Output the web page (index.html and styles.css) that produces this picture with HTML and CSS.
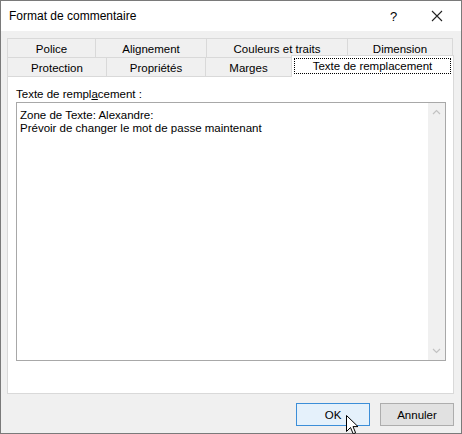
FILE: index.html
```html
<!DOCTYPE html>
<html lang="fr">
<head>
    <meta charset="UTF-8">
    <title>Format de commentaire</title>
    <link rel="stylesheet" href="styles.css">
</head>
<body>
    <div class="dialog">
        <div class="titlebar">
            <span class="title">Format de commentaire</span>
            <span class="help">?</span>
            <span class="close">
                <svg width="12" height="12" viewBox="0 0 12 12"><path d="M1 1 L11 11 M11 1 L1 11" stroke="#222" stroke-width="1.1" fill="none"/></svg>
            </span>
        </div>
        <div class="content">
            <div class="tabs">
                <div class="tab-row">
                    <div class="tab w-police">Police</div>
                    <div class="tab w-align">Alignement</div>
                    <div class="tab w-couleurs">Couleurs et traits</div>
                    <div class="tab w-dim">Dimension</div>
                </div>
                <div class="tab-row">
                    <div class="tab w-protect">Protection</div>
                    <div class="tab w-props">Propriétés</div>
                    <div class="tab w-marges">Marges</div>
                    <div class="tab active"><span class="focus">Texte de remplacement</span></div>
                </div>
            </div>
            <div class="panel">
                <div class="label">Texte de rempl<u>a</u>cement :</div>
                <div class="textbox">
                    <div class="text">Zone de Texte: Alexandre:<br>Prévoir de changer le mot de passe maintenant</div>
                    <div class="scrollbar">
                        <svg width="9" height="6" viewBox="0 0 9 6"><path d="M1 5 L4.5 1.5 L8 5" stroke="#c2c2c2" stroke-width="1.2" fill="none"/></svg>
                        <svg width="9" height="6" viewBox="0 0 9 6"><path d="M1 1 L4.5 4.5 L8 1" stroke="#c2c2c2" stroke-width="1.2" fill="none"/></svg>
                    </div>
                </div>
            </div>
        </div>
        <div class="footer">
            <button class="btn ok">OK</button>
            <button class="btn">Annuler</button>
        </div>
        <svg class="cursor" width="13" height="20" viewBox="0 0 13 20">
            <path d="M0.5 0.5 L0.5 16.5 L4.5 12.5 L7.2 18.8 L9.6 17.8 L7 11.6 L12 11.6 Z" fill="#fff" stroke="#000" stroke-width="1"/>
        </svg>
    </div>
</body>
</html>
```

FILE: styles.css
```css
body {
    margin: 0;
    font-family: "Liberation Sans", Arial, sans-serif;
    font-size: 11.5px;
    color: #000;
}
.dialog {
    position: relative;
    width: 462px;
    height: 434px;
    box-sizing: border-box;
    border: 1px solid #7a7a7a;
    background-color: #f0f0f0;
}
.titlebar {
    display: flex;
    align-items: center;
    height: 30px;
    background-color: #fff;
    padding-left: 8px;
}
.title {
    flex: 1;
    font-size: 12px;
}
.help {
    width: 12px;
    margin-right: 29px;
    font-size: 13px;
}
.close {
    display: flex;
    margin-right: 18px;
}
.content {
    padding: 7px 0 0 6px;
}
.tab-row {
    display: flex;
    height: 19px;
}
.tab {
    box-sizing: border-box;
    height: 19px;
    padding-top: 2px;
    line-height: 16px;
    text-align: center;
    border-top: 1px solid #d9d9d9;
    border-left: 1px solid #d9d9d9;
    background-color: #f0f0f0;
}
.w-police { width: 88px; }
.w-align { width: 111px; }
.w-couleurs { width: 141px; }
.w-dim { width: 106px; border-right: 1px solid #d9d9d9; }
.w-protect { width: 99px; }
.w-props { width: 99px; }
.w-marges { width: 86px; }
.tab.active {
    position: relative;
    z-index: 1;
    width: 163px;
    height: 22px;
    margin-top: -2px;
    padding: 2px 2px 0;
    background-color: #fff;
    border-right: 1px solid #d9d9d9;
}
.focus {
    display: block;
    height: 16px;
    line-height: 15px;
    box-sizing: border-box;
    border: 1px dotted #000;
}
.panel {
    box-sizing: border-box;
    width: 447px;
    height: 318px;
    padding: 9px 7px 0 8px;
    background-color: #fff;
    border: 1px solid #d9d9d9;
}
.label {
    height: 16px;
    line-height: 16px;
}
.textbox {
    display: flex;
    box-sizing: border-box;
    width: 430px;
    height: 259px;
    border: 1px solid #a8a8a8;
}
.text {
    flex: 1;
    padding: 6px 3px;
    line-height: 13px;
}
.scrollbar {
    display: flex;
    flex-direction: column;
    justify-content: space-between;
    align-items: center;
    width: 17px;
    padding: 6px 0;
    box-sizing: border-box;
    background-color: #f0f0f0;
}
.footer {
    display: flex;
    justify-content: flex-end;
    gap: 10px;
    padding: 9px 7px 0 0;
}
.btn {
    width: 74px;
    height: 23px;
    padding: 1px 0 0;
    font-family: "Liberation Sans", Arial, sans-serif;
    font-size: 11.5px;
    color: #000;
    background-color: #e1e1e1;
    border: 1px solid #adadad;
}
.btn.ok {
    background-color: #e5f1fb;
    border-color: #3c8ed8;
}
.cursor {
    position: absolute;
    left: 345px;
    top: 414px;
}
```
